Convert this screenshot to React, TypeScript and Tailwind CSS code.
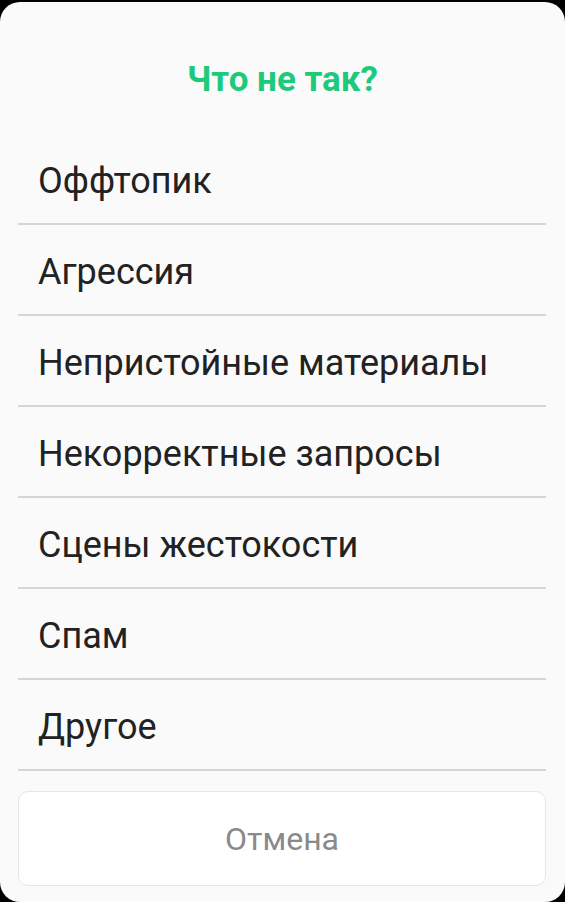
import React from "react";

const items = [
  "Оффтопик",
  "Агрессия",
  "Непристойные материалы",
  "Некорректные запросы",
  "Сцены жестокости",
  "Спам",
  "Другое",
];

export default function App() {
  return (
    <div
      className="w-[565px] h-[902px] bg-black pt-[2px] overflow-hidden"
      style={{ fontFamily: "Roboto, 'Noto Sans', sans-serif" }}
    >
      <div className="h-[900px] bg-[#fafafa] rounded-[20px] flex flex-col">
        <div className="h-[132px] pt-[58px]">
          <div className="text-center text-[35px] leading-[40px] font-bold text-[#1dc97b]">
            Что не так?
          </div>
        </div>
        <div className="ml-[18px] mr-[19px] flex flex-col">
          {items.map((t) => (
            <div
              key={t}
              className="h-[91px] border-b-2 border-[#d6d6d6] flex items-center pl-[20px] pt-[4px] text-[36px] leading-[42px] text-[#222222]"
            >
              {t}
            </div>
          ))}
        </div>
        <div className="ml-[18px] mr-[19px] mt-[20px] h-[95px] rounded-[10px] border border-[#e6e6e6] bg-white flex items-center justify-center text-[32px] text-[#8a8a8a]">
          Отмена
        </div>
      </div>
    </div>
  );
}
